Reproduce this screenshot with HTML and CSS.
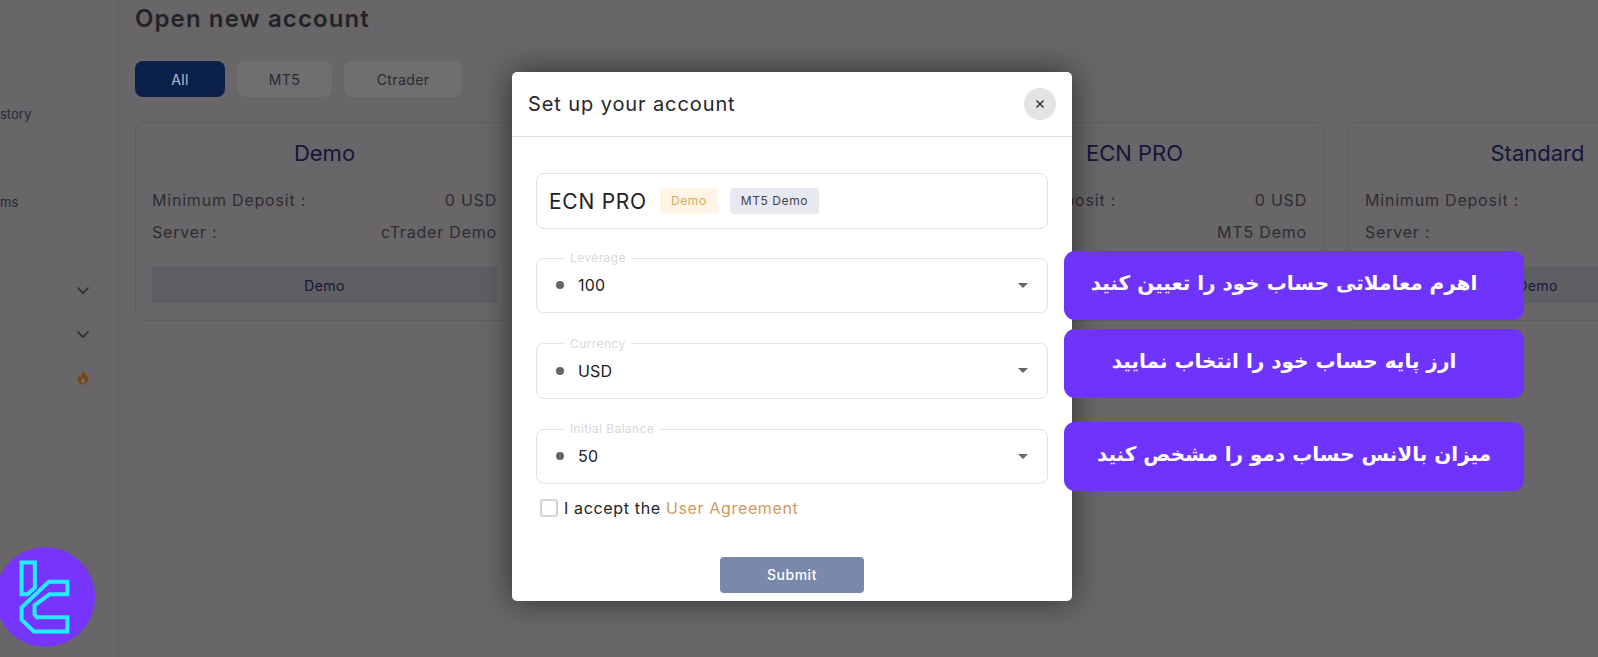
FILE: index.html
```html
<!DOCTYPE html>
<html lang="en">
<head>
    <meta charset="UTF-8">
    <meta name="viewport" content="width=device-width, initial-scale=1.0">
    <title>Open new account</title>
    <link rel="stylesheet" href="styles.css">
</head>
<body>

    <div class="page">
        <aside class="sidebar">
            <div class="nav-item">story</div>
            <div class="nav-item"></div>
            <div class="nav-item">ms</div>
            <div class="nav-item"></div>
            <div class="nav-item nav-icon">
                <svg width="14" height="9" viewBox="0 0 14 9"><path d="M1.500 1.500 7 7l5.500-5.500" fill="none" stroke="#2b2a2e" stroke-width="1.600"/></svg>
            </div>
            <div class="nav-item nav-icon">
                <svg width="14" height="9" viewBox="0 0 14 9"><path d="M1.500 1.500 7 7l5.500-5.500" fill="none" stroke="#2b2a2e" stroke-width="1.600"/></svg>
            </div>
            <div class="nav-item nav-icon nav-flame">
                <svg width="12" height="14" viewBox="0 0 12 14"><path d="M6.500 0c.5 2.500 4.800 4.200 4.800 8.300A5.200 5.200 0 0 1 6 13.600 5.200 5.200 0 0 1 .8 8.400c0-1.800.8-3 1.800-4 .1 1.200.6 1.900 1.300 2.200C3.700 4 4.800 1.700 6.500 0z" fill="#7d4510"/><path d="M6.200 6.500c.3 1.200 2 1.800 2 3.500a2.200 2.200 0 0 1-4.400 0c0-1.500 1.700-2 2.400-3.500z" fill="#6d6a6c"/></svg>
            </div>
        </aside>

        <main class="main">
            <h1 class="page-title">Open new account</h1>
            <div class="tabs">
                <button class="tab tab-all">All</button>
                <button class="tab tab-mt5">MT5</button>
                <button class="tab tab-ctrader">Ctrader</button>
            </div>
            <div class="cards">
                <div class="card">
                    <h2>Demo</h2>
                    <div class="row"><span>Minimum Deposit :</span><span>0 USD</span></div>
                    <div class="row"><span>Server :</span><span>cTrader Demo</span></div>
                    <button class="card-btn">Demo</button>
                </div>
                <!-- sits fully behind the modal -->
                <div class="card"></div>
                <div class="card">
                    <h2>ECN PRO</h2>
                    <div class="row"><span>Minimum Deposit :</span><span>0 USD</span></div>
                    <div class="row row-end"><span>MT5 Demo</span></div>
                    <button class="card-btn"></button>
                </div>
                <div class="card">
                    <h2>Standard</h2>
                    <div class="row"><span>Minimum Deposit :</span></div>
                    <div class="row"><span>Server :</span></div>
                    <button class="card-btn">Demo</button>
                </div>
            </div>
        </main>
    </div>

    <div class="modal">
        <div class="modal-header">
            <span class="modal-title">Set up your account</span>
            <button class="close-btn">
                <svg width="10" height="10" viewBox="0 0 10 10"><path d="M1.500 1.500l7 7M8.500 1.500l-7 7" stroke="#222" stroke-width="1.300"/></svg>
            </button>
        </div>
        <div class="modal-body">
            <div class="account-box">
                <span class="account-name">ECN PRO</span>
                <span class="badge badge-demo">Demo</span>
                <span class="badge badge-server">MT5 Demo</span>
            </div>

            <fieldset class="field">
                <legend>Leverage</legend>
                <span class="dot"></span>
                <span class="field-value">100</span>
                <span class="arrow"></span>
            </fieldset>

            <fieldset class="field">
                <legend>Currency</legend>
                <span class="dot"></span>
                <span class="field-value">USD</span>
                <span class="arrow"></span>
            </fieldset>

            <fieldset class="field">
                <legend>Initial Balance</legend>
                <span class="dot"></span>
                <span class="field-value">50</span>
                <span class="arrow"></span>
            </fieldset>

            <label class="agree">
                <span class="checkbox"></span>
                <span>I accept the <a class="agree-link">User Agreement</a></span>
            </label>

            <div class="submit-wrap">
                <button class="submit-btn">Submit</button>
            </div>
        </div>
    </div>

    <div class="note note-1" dir="rtl">اهرم معاملاتی حساب خود را تعیین کنید</div>
    <div class="note note-2" dir="rtl">ارز پایه حساب خود را انتخاب نمایید</div>
    <div class="note note-3" dir="rtl">میزان بالانس حساب دمو را مشخص کنید</div>

    <!-- site logo stamped over the corner -->
    <div class="logo">
        <svg width="97" height="100" viewBox="-5 650 292 300">
            <circle cx="137" cy="800" r="150" fill="#7735fb"/>
            <path d="M66 696H106V772L84 792H66ZM204 754H148L66 832V868L103 904H204V861H112L105 852V825L150 792H204Z" fill="none" stroke="#1ff0ff" stroke-width="12"/>
        </svg>
    </div>

</body>
</html>
```

FILE: styles.css
```css
* {
    box-sizing: border-box;
}

body {
    margin: 0;
    height: 657px;
    overflow: hidden;
    position: relative;
    background-color: #686669;
    font-family: Inter, "Liberation Sans", sans-serif;
    color: #2e2d31;
}

button {
    font-family: inherit;
    border: 0;
}

/* page behind the dimmed backdrop */
.page {
    display: flex;
    height: 657px;
}

.sidebar {
    width: 119px;
    flex: none;
    padding-top: 92px;
    border-right: 1px solid #5f5d60;
    font-size: 13px;
}

.nav-item {
    height: 44px;
    display: flex;
    align-items: center;
    color: #2b2a2e;
}

.nav-icon {
    justify-content: flex-end;
    padding-right: 28px;
}

.nav-flame {
    padding-right: 29px;
}

.main {
    padding-left: 16px;
    flex: 1;
    min-width: 0;
}

.page-title {
    margin: 0;
    height: 61px;
    padding-top: 4px;
    font-size: 24px;
    line-height: 30px;
    font-weight: 600;
    color: #232226;
    letter-spacing: 1.1px;
}

.tabs {
    display: flex;
    gap: 12px;
}

.tab {
    height: 36px;
    border-radius: 8px;
    font-size: 14px;
    letter-spacing: 0.4px;
    background-color: #6f6e71;
    color: #2b2a2e;
}

.tab-all {
    width: 90px;
    background-color: #0b2049;
    color: #b9bcc7;
}

.tab-mt5 {
    width: 95px;
}

.tab-ctrader {
    width: 118px;
}

.cards {
    display: flex;
    gap: 26px;
    margin-top: 25px;
}

.card {
    width: 379px;
    height: 199px;
    flex: none;
    padding: 15px 16px 0;
    border: 1px solid #5f5d60;
    border-radius: 8px;
}

.card:last-child {
    margin-left: -2px;
}

.card h2 {
    margin: 0 0 16px;
    height: 30px;
    text-align: center;
    font-size: 22px;
    line-height: 30px;
    font-weight: 400;
    color: #14163a;
}

.row {
    display: flex;
    justify-content: space-between;
    height: 32px;
    font-size: 16px;
    letter-spacing: 0.8px;
    line-height: 32px;
    color: #2e2d31;
}

.row-end {
    justify-content: flex-end;
}

.card-btn {
    display: block;
    width: 100%;
    height: 36px;
    margin-top: 19px;
    font-size: 14px;
    letter-spacing: 0.4px;
    background-color: #5f5e62;
    color: #14163a;
}

/* modal */
.modal {
    position: absolute;
    left: 512px;
    top: 72px;
    width: 560px;
    height: 529px;
    background-color: #fff;
    border-radius: 5px;
    box-shadow: 0 0 30px rgba(0, 0, 0, 0.55);
    overflow: hidden;
}

.modal-header {
    display: flex;
    justify-content: space-between;
    align-items: center;
    height: 65px;
    padding: 0 16px;
    border-bottom: 1px solid #dedee2;
}

.modal-title {
    font-size: 20px;
    letter-spacing: 0.9px;
    color: #26262a;
}

.close-btn {
    width: 32px;
    height: 32px;
    padding: 0;
    border-radius: 50%;
    background-color: #e4e4e6;
    display: flex;
    align-items: center;
    justify-content: center;
}

.modal-body {
    padding: 36px 24px 0;
}

.account-box {
    display: flex;
    align-items: center;
    height: 56px;
    padding: 0 12px;
    border: 1px solid #e2e2e6;
    border-radius: 8px;
}

.account-name {
    font-size: 21px;
    letter-spacing: 0.75px;
    color: #222;
    margin-right: 13px;
}

.badge {
    height: 26px;
    border-radius: 4px;
    font-size: 12px;
    letter-spacing: 0.6px;
    line-height: 26px;
}

.badge-demo {
    padding: 0 11px;
    background-color: #fff4e6;
    color: #dba85c;
    margin-right: 12px;
}

.badge-server {
    padding: 0 11px;
    background-color: #e7e8f0;
    color: #44454f;
}

.field {
    display: flex;
    align-items: center;
    height: 62px;
    margin: 23.5px 0 0;
    padding: 0 19px 7px 19px;
    border: 1px solid #e2e2e6;
    border-radius: 8px;
    position: relative;
}

.account-box + .field {
    margin-top: 22px;
}

.field legend {
    margin-left: 9px;
    padding: 0 5px;
    font-size: 12px;
    letter-spacing: 0.4px;
    line-height: 14px;
    color: #d8d8dc;
}

.dot {
    width: 8px;
    height: 8px;
    border-radius: 50%;
    background-color: #666;
    margin-right: 14px;
}

.field-value {
    flex: 1;
    font-size: 16px;
    letter-spacing: 0.2px;
    color: #222;
}

.arrow {
    width: 0;
    height: 0;
    border-left: 5px solid transparent;
    border-right: 5px solid transparent;
    border-top: 5px solid #666;
}

.agree {
    display: flex;
    align-items: center;
    gap: 6px;
    margin: 14px 0 0 4px;
    font-size: 16px;
    letter-spacing: 0.65px;
    color: #222;
}

.checkbox {
    width: 18px;
    height: 18px;
    border: 2px solid #d4d4d6;
    border-radius: 3px;
}

.agree-link {
    color: #cf9a5e;
}

.submit-wrap {
    display: flex;
    justify-content: center;
    margin-top: 38.5px;
}

.submit-btn {
    width: 144px;
    height: 36px;
    border-radius: 4px;
    font-size: 14px;
    letter-spacing: 0.5px;
    font-weight: 500;
    background-color: #7a88ab;
    color: #fff;
}

/* purple annotations */
.note {
    position: absolute;
    left: 1064px;
    width: 460px;
    height: 69px;
    padding-bottom: 6px;
    display: flex;
    align-items: center;
    justify-content: center;
    border-radius: 11px;
    background-color: #6f34fb;
    color: #fff;
    font-family: "DejaVu Sans", sans-serif;
    font-size: 20px;
    font-weight: 700;
}

.note-1 {
    top: 251px;
    padding-right: 20px;
}

.note-2 {
    top: 329px;
    padding-right: 20px;
}

.note-3 {
    top: 422px;
}

.logo {
    position: absolute;
    left: -2px;
    top: 547px;
    line-height: 0;
}
```
